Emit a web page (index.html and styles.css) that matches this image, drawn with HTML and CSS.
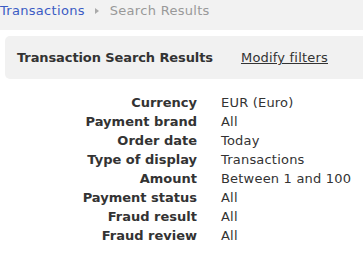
FILE: index.html
```html
<html>
<head>
<link rel="stylesheet" href="styles.css">
<title>Transaction Search Results</title>
</head>
<body>
<div class="crumbs">
<a class="crumb-link" href="#">Transactions</a>
<span class="crumb-sep"></span>
<span class="crumb-current">Search Results</span>
</div>
<div class="results-head">
<h1>Transaction Search Results</h1>
<a class="modify" href="#">Modify filters</a>
</div>
<dl class="filters">
<dt>Currency</dt><dd>EUR (Euro)</dd>
<dt>Payment brand</dt><dd>All</dd>
<dt>Order date</dt><dd>Today</dd>
<dt>Type of display</dt><dd>Transactions</dd>
<dt>Amount</dt><dd>Between 1 and 100</dd>
<dt>Payment status</dt><dd>All</dd>
<dt>Fraud result</dt><dd>All</dd>
<dt>Fraud review</dt><dd>All</dd>
</dl>
</body>
</html>
```

FILE: styles.css
```css
body { margin: 0; font-family: "DejaVu Sans", Verdana, sans-serif; font-size: 13px; color: #333; background: #fff; }
.crumbs { background: #f2f2f2; height: 30px; line-height: 22px; display: flex; align-items: flex-start; letter-spacing: 0.3px; }
.crumb-link { color: #3b5cc4; text-decoration: none; }
.crumb-sep { width: 0; height: 0; border-left: 4px solid #aaa; border-top: 3.5px solid transparent;
  border-bottom: 3.5px solid transparent; margin: 8px 11px 0 10px; }
.crumb-current { color: #999; }
.results-head { margin: 6px 0 0 5px; height: 43px; background: #f1f1f1; border-radius: 5px 0 0 5px;
  display: flex; align-items: center; padding-left: 12px; }
.results-head h1 { font-size: 13px; margin: 0; font-weight: bold; letter-spacing: -0.1px; }
.modify { color: #333; margin-left: 28px; letter-spacing: 0.2px; }
.filters { display: grid; grid-template-columns: 197px auto; column-gap: 24px; margin: 14px 0 0 0; line-height: 19px; }
.filters dt { text-align: right; font-weight: bold; }
.filters dd { margin: 0; letter-spacing: 0.2px; }
```
